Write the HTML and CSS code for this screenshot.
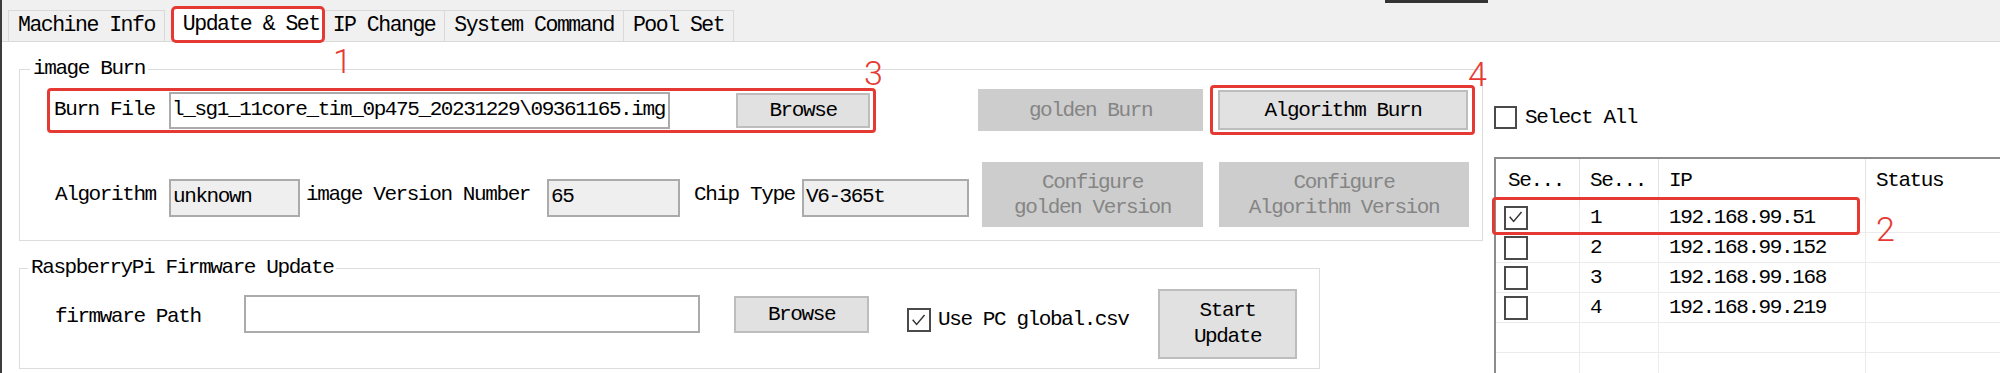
FILE: index.html
```html
<!DOCTYPE html>
<html lang="en">
<head>
  <meta charset="UTF-8" />
  <title>Update &amp; Set</title>
  <link rel="stylesheet" href="styles.css">
</head>
<body>
  <div class="app">
    <div class="tabstrip">
      <div class="tab">Machine Info</div>
      <div class="tab active">Update &amp; Set</div>
      <div class="tab">IP Change</div>
      <div class="tab">System Command</div>
      <div class="tab">Pool Set</div>
      <div class="grip"></div>
    </div>

    <div class="page">
      <div class="left">
        <fieldset class="group burn">
          <legend>image Burn</legend>
          <div class="row row-file">
            <div class="filebox">
              <span class="lbl lbl-file">Burn File</span>
              <div class="txt txt-file">l_sg1_11core_tim_0p475_20231229\09361165.img</div>
              <div class="btn btn-browse">Browse</div>
            </div>
            <div class="btn off btn-golden">golden Burn</div>
            <div class="algobox">
              <div class="btn btn-algo">Algorithm Burn</div>
            </div>
          </div>
          <div class="row row-info">
            <span class="lbl lbl-algo">Algorithm</span>
            <div class="txt ro txt-algo">unknown</div>
            <span class="lbl lbl-ver">image Version Number</span>
            <div class="txt ro txt-ver">65</div>
            <span class="lbl lbl-chip">Chip Type</span>
            <div class="txt ro txt-chip">V6-365t</div>
            <div class="btn off btn-cfg-golden">Configure<br>golden Version</div>
            <div class="btn off btn-cfg-algo">Configure<br>Algorithm Version</div>
          </div>
        </fieldset>

        <fieldset class="group firmware">
          <legend>RaspberryPi Firmware Update</legend>
          <div class="row row-fw">
            <span class="lbl lbl-fw">firmware Path</span>
            <div class="txt txt-fw"></div>
            <div class="btn btn-fw-browse">Browse</div>
            <span class="box fw-check">
              <svg viewBox="0 0 24 24" width="20" height="19"><polyline points="4,11 9,17 19,5" fill="none" stroke="#333" stroke-width="1.8"/></svg>
            </span>
            <span class="lbl lbl-csv">Use PC global.csv</span>
            <div class="btn btn-start">Start<br>Update</div>
          </div>
        </fieldset>
      </div>

      <div class="right">
        <div class="selall">
          <span class="box"></span>
          <span class="lbl">Select All</span>
        </div>
        <div class="list">
          <div class="hd">Se...</div>
          <div class="hd">Se...</div>
          <div class="hd">IP</div>
          <div class="hd">Status</div>

          <div class="cell ck"><span class="box">
            <svg viewBox="0 0 24 24" width="20" height="19"><polyline points="4,11 9,17 19,5" fill="none" stroke="#333" stroke-width="1.8"/></svg>
          </span></div>
          <div class="cell">1</div>
          <div class="cell">192.168.99.51</div>
          <div class="cell"></div>

          <div class="cell ck"><span class="box"></span></div>
          <div class="cell">2</div>
          <div class="cell">192.168.99.152</div>
          <div class="cell"></div>

          <div class="cell ck"><span class="box"></span></div>
          <div class="cell">3</div>
          <div class="cell">192.168.99.168</div>
          <div class="cell"></div>

          <div class="cell ck"><span class="box"></span></div>
          <div class="cell">4</div>
          <div class="cell">192.168.99.219</div>
          <div class="cell"></div>

          <div class="cell"></div><div class="cell"></div><div class="cell"></div><div class="cell"></div>
          <div class="cell"></div><div class="cell"></div><div class="cell"></div><div class="cell"></div>

          <!-- annotation around the first row -->
          <div class="rowmark"></div>
        </div>
      </div>
    </div>

    <!-- red step numbers -->
    <span class="num n1">1</span>
    <span class="num n2">2</span>
    <span class="num n3">3</span>
    <span class="num n4">4</span>
  </div>
</body>
</html>
```

FILE: styles.css
```css
* {
  box-sizing: border-box;
}

body {
  margin: 0;
  background: #fff;
  color: #000;
  font-family: "Liberation Mono", "DejaVu Sans Mono", monospace;
  font-size: 21px;
  letter-spacing: -1.4px;
}

.app {
  position: relative;
  width: 2000px;
  height: 373px;
  overflow: hidden;
  border-left: 2px solid #3c3c3c;
}

/* tab header */
.tabstrip {
  position: relative;
  height: 42px;
  background: #f0f0f0;
  border-bottom: 1px solid #d9d9d9;
  display: flex;
  align-items: flex-end;
  padding-left: 6px;
}

.tab {
  height: 31px;
  line-height: 29px;
  padding: 0 9px;
  border: 1px solid #d9d9d9;
  border-bottom: none;
  background: #f0f0f0;
  margin-right: -1px;
  font-size: 21.5px;
  letter-spacing: -1.5px;
  white-space: nowrap;
}

.tab.active {
  position: relative;
  z-index: 1;
  height: 35px;
  line-height: 33px;
  margin: 0 -1px -1px 8px;
  padding: 0 3px 0 10px;
  background: #fff;
  outline: 3px solid #e53a33;
  outline-offset: -2px;
  border-radius: 4px;
}

.grip {
  position: absolute;
  left: 1383px;
  top: 0;
  width: 103px;
  height: 3px;
  background: #333;
}

/* page body */
.page {
  display: flex;
}

.left {
  width: 1481px;
  flex: none;
  padding-left: 17px;
}

.group {
  margin: 16px 0 0 0;
  border: 1px solid #dcdcdc;
}

.group legend {
  margin-left: 10px;
  padding: 0 3px;
  line-height: 22px;
}

.burn {
  width: 1464px;
  padding: 5px 0 13px 0;
}

.firmware {
  width: 1301px;
  padding: 10px 0 9px 0;
}

.firmware legend {
  margin-left: 8px;
}

.row {
  display: flex;
  align-items: center;
  white-space: nowrap;
}

.lbl {
  line-height: 22px;
  white-space: nowrap;
}

.txt {
  border: 2px solid #ababab;
  background: #fff;
  line-height: 32px;
  padding: 0 2px;
  overflow: hidden;
  white-space: nowrap;
}

.txt.ro {
  background: #efefef;
}

.btn {
  display: flex;
  align-items: center;
  justify-content: center;
  text-align: center;
  background: #e1e1e1;
  border: 2px solid #bdbdbd;
  white-space: nowrap;
}

.btn.off {
  background: #cdcdcd;
  border-color: #cdcdcd;
  color: #858585;
}

/* image burn, first row */
.row-file {
  height: 50px;
  margin-left: 27px;
}

.filebox {
  display: flex;
  align-items: center;
  width: 829px;
  height: 45px;
  padding: 0 3px 0 4px;
  border: 3px solid #e53a33;
  border-radius: 4px;
}

.lbl-file {
  width: 115px;
}

.txt-file {
  width: 501px;
  height: 37px;
  padding-left: 1px;
}

.btn-browse {
  width: 134px;
  height: 35px;
  margin-left: 66px;
}

.btn-golden {
  width: 225px;
  height: 42px;
  margin-left: 102px;
}

.algobox {
  margin-left: 7px;
  padding: 2px 4px 2px 5px;
  border: 3px solid #e53a33;
  border-radius: 4px;
}

.btn-algo {
  width: 250px;
  height: 40px;
}

/* image burn, second row */
.row-info {
  height: 65px;
  margin-top: 27px;
  padding-left: 35px;
}

.row-info .txt {
  height: 38px;
  margin-top: 7px;
}

.lbl-algo {
  width: 114px;
}

.txt-algo {
  width: 131px;
}

.lbl-ver {
  width: 241px;
  margin-left: 6px;
}

.txt-ver {
  width: 133px;
}

.lbl-chip {
  width: 108px;
  margin-left: 14px;
}

.txt-chip {
  width: 167px;
}

.btn-cfg-golden,
.btn-cfg-algo {
  height: 65px;
  line-height: 25px;
}

.btn-cfg-golden {
  width: 221px;
  margin-left: 13px;
}

.btn-cfg-algo {
  width: 250px;
  margin-left: 16px;
}

/* firmware row */
.row-fw {
  align-items: flex-start;
  height: 70px;
  padding-left: 35px;
}

.lbl-fw {
  width: 189px;
  margin-top: 17px;
}

.txt-fw {
  width: 456px;
  height: 38px;
  margin-top: 6px;
}

.btn-fw-browse {
  width: 135px;
  height: 37px;
  margin: 7px 0 0 34px;
}

.fw-check {
  margin: 19px 0 0 38px;
}

.lbl-csv {
  width: 189px;
  margin: 20px 0 0 7px;
}

.btn-start {
  width: 139px;
  height: 70px;
  line-height: 26px;
  margin-left: 31px;
}

/* checkboxes */
.box {
  display: inline-flex;
  align-items: center;
  justify-content: center;
  width: 24px;
  height: 24px;
  border: 2px solid #4a4a4a;
  background: #fff;
  flex: none;
}

/* right side list */
.right {
  flex: 1;
  padding-left: 11px;
  overflow: hidden;
}

.selall {
  display: flex;
  align-items: center;
  height: 23px;
  margin-top: 64px;
}

.selall .box {
  width: 23px;
  height: 23px;
}

.selall .lbl {
  margin-left: 8px;
}

.list {
  position: relative;
  display: grid;
  grid-template-columns: 84px 79px 207px 300px;
  grid-template-rows: 44px;
  grid-auto-rows: 30px;
  margin-top: 28px;
  border-left: 2px solid #8c8c8c;
  border-top: 2px solid #8c8c8c;
  width: 672px;
}

.list .hd {
  line-height: 44px;
  padding-left: 10px;
  border-right: 1px solid #e3e3e3;
  white-space: nowrap;
}

.list .hd:first-child {
  padding-left: 12px;
}

.list .cell {
  line-height: 29px;
  padding-left: 10px;
  border-right: 1px solid #ececec;
  border-bottom: 1px solid #ececec;
  white-space: nowrap;
}

.list .cell.ck {
  display: flex;
  align-items: center;
  padding-left: 8px;
}

.rowmark {
  position: absolute;
  left: -4px;
  top: 38px;
  width: 368px;
  height: 38px;
  border: 3px solid #e53a33;
  border-radius: 4px;
}

/* red step numbers */
.num {
  position: absolute;
  font-family: Roboto, "Liberation Sans", sans-serif;
  font-weight: 300;
  font-size: 34px;
  line-height: 34px;
  letter-spacing: 0;
  color: #e53a33;
}

.n1 { left: 331px; top: 44px; }
.n2 { left: 1874px; top: 212px; }
.n3 { left: 862px; top: 56px; }
.n4 { left: 1466px; top: 57px; }
```
